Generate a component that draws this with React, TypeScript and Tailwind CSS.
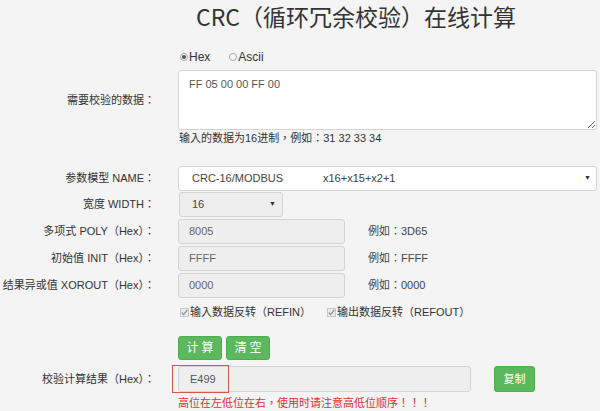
import React from "react";

const font = "font-['Liberation_Sans','Noto_Sans_CJK_TC',sans-serif]";

function Label({ children }: { children: React.ReactNode }) {
   return <div className="text-right pr-[23px] text-[11px] text-[#333] whitespace-nowrap">{children}</div>
}

function Radio({ checked, label }: { checked?: boolean; label: string }) {
   return (
      <span className="flex items-center">
         <span className="w-[8px] h-[8px] rounded-full border border-[#a8a8a8] bg-[#f8f8f8] flex items-center justify-center">
            {checked && <span className="w-[4px] h-[4px] rounded-full bg-[#555]" />}
         </span>
         <span className="ml-[1px] text-[12px] text-[#333]">{label}</span>
      </span>
   )
}

function Check({ label }: { label: string }) {
   return (
      <span className="flex items-center">
         <svg width="9" height="9" viewBox="0 0 9 9" className="mr-[1px]">
            <rect x="0.5" y="0.5" width="8" height="8" fill="#eaeaea" stroke="#c8c8c8" />
            <path d="M1.8 4.6 L3.6 6.6 L7.4 1.8" stroke="#8a8a8a" strokeWidth="1.2" fill="none" />
         </svg>
         <span className="text-[11px] text-[#333]">{label}</span>
      </span>
   )
}

function Field({ label, value, example }: { label: string; value: string; example: string }) {
   return (
      <div className="grid grid-cols-[178px_1fr] items-center mt-[2px]">
         <Label>{label}</Label>
         <div className="flex items-center">
            <div className="w-[167px] h-[25px] rounded-[3px] border border-[#d4d4d4] bg-[#eeeeee] pl-[10px] flex items-center text-[11px] text-[#666]">{value}</div>
            <span className="ml-[23px] text-[11px] text-[#444]">例如：{example}</span>
         </div>
      </div>
   )
}

export default function App() {
   return (
      <div className={`w-[600px] h-[411px] bg-[#f4f4f4] overflow-hidden ${font}`}>
         <div className="h-[48px] pl-[196px] pt-[2px]">
            <h1 className="text-[23px] leading-[28px] text-[#333] font-['Noto_Sans_CJK_TC',sans-serif] whitespace-nowrap">CRC（循环冗余校验）在线计算</h1>
         </div>

         <div className="grid grid-cols-[178px_1fr] h-[18px] items-center">
            <div />
            <div className="flex items-center gap-[19px] pl-[2px]">
               <Radio checked label="Hex" />
               <Radio label="Ascii" />
            </div>
         </div>

         <div className="grid grid-cols-[178px_1fr] items-center mt-[4px] pr-[3px]">
            <Label>需要校验的数据：</Label>
            <textarea
               readOnly
               defaultValue="FF 05 00 00 FF 00"
               className="h-[60px] w-full rounded-[3px] border border-[#d4d4d4] bg-white pl-[10px] pt-[5px] text-[11px] text-[#555] resize-y outline-none"
            />
         </div>
         <div className="grid grid-cols-[178px_1fr] h-[16px] items-center">
            <div />
            <div className="pl-[1px] text-[11px] text-[#333]">输入的数据为16进制，例如：31 32 33 34</div>
         </div>

         <div className="grid grid-cols-[178px_1fr] items-center mt-[20px] pr-[3px]">
            <Label>参数模型 NAME：</Label>
            <div className="h-[25px] rounded-[3px] border border-[#d4d4d4] bg-white flex items-center pl-[13px] pr-[5px] text-[11px] text-[#444]">
               <span className="w-[131px]">CRC-16/MODBUS</span>
               <span>x16+x15+x2+1</span>
               <span className="ml-auto text-[7px] text-[#333]">▼</span>
            </div>
         </div>

         <div className="grid grid-cols-[178px_1fr] items-center mt-[1px]">
            <Label>宽度 WIDTH：</Label>
            <div className="ml-[1px] w-[104px] h-[25px] rounded-[3px] border border-[#d4d4d4] bg-[#eeeeee] flex items-center pl-[12px] pr-[6px] text-[11px] text-[#444]">
               <span>16</span>
               <span className="ml-auto text-[7px] text-[#333]">▼</span>
            </div>
         </div>

         <Field label="多项式 POLY（Hex）：" value="8005" example="3D65" />
         <Field label="初始值 INIT（Hex）：" value="FFFF" example="FFFF" />
         <Field label="结果异或值 XOROUT（Hex）：" value="0000" example="0000" />

         <div className="grid grid-cols-[178px_1fr] h-[16px] items-center mt-[6px]">
            <div />
            <div className="flex items-center pl-[2px] gap-[16px]">
               <Check label="输入数据反转（REFIN）" />
               <Check label="输出数据反转（REFOUT）" />
            </div>
         </div>

         <div className="grid grid-cols-[178px_1fr] items-center mt-[16px]">
            <div />
            <div className="flex gap-[4px]">
               <button className="w-[44px] h-[24px] rounded-[3px] bg-[#5cb85c] border border-[#4cae4c] text-white text-[12px] tracking-[3px] pl-[3px]">计算</button>
               <button className="w-[44px] h-[24px] rounded-[3px] bg-[#5cb85c] border border-[#4cae4c] text-white text-[12px] tracking-[3px] pl-[3px]">清空</button>
            </div>
         </div>

         <div className="grid grid-cols-[178px_1fr] items-center mt-[6px]">
            <Label>校验计算结果（Hex）：</Label>
            <div className="flex items-center">
               <div className="relative w-[293px] h-[26px] rounded-[3px] border border-[#d4d4d4] bg-[#eeeeee] pl-[11px] flex items-center text-[11px] text-[#555]">
                  E499
                  <div className="absolute left-[-7px] top-[-2px] w-[57px] h-[28px] border border-[#d9534f]" />
               </div>
               <button className="ml-[23px] w-[41px] h-[26px] rounded-[3px] bg-[#5cb85c] border border-[#4cae4c] text-white text-[11px]">复制</button>
            </div>
         </div>

         <div className="grid grid-cols-[178px_1fr] h-[17px] items-center pt-[3px]">
            <div />
            <div className="text-[11px] text-[#e0312f] whitespace-nowrap">高位在左低位在右，使用时请注意高低位顺序！！！</div>
         </div>
      </div>
   )
}
